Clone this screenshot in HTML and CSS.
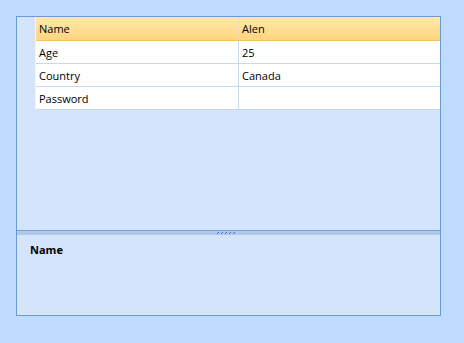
FILE: index.html
```html
<!DOCTYPE html>
<html>
<head>
<meta charset="utf-8">
<link rel="stylesheet" href="styles.css">
</head>
<body>
<div class="frame">
  <div class="grid-pane">
    <div class="grid">
      <div class="row header">
        <div class="rh"></div>
        <div class="cell">Name</div>
        <div class="cell">Alen</div>
      </div>
      <div class="row">
        <div class="rh"></div>
        <div class="cell">Age</div>
        <div class="cell">25</div>
      </div>
      <div class="row">
        <div class="rh"></div>
        <div class="cell">Country</div>
        <div class="cell">Canada</div>
      </div>
      <div class="row">
        <div class="rh"></div>
        <div class="cell">Password</div>
        <div class="cell"></div>
      </div>
    </div>
  </div>
  <div class="splitter">
    <svg class="grip" width="20" height="4" viewBox="0 0 20 4">
      <g fill="#2f6fd0">
        <rect x="1" y="2" width="1" height="1"/><rect x="2" y="1" width="1" height="1"/>
        <rect x="5" y="2" width="1" height="1"/><rect x="6" y="1" width="1" height="1"/>
        <rect x="9" y="2" width="1" height="1"/><rect x="10" y="1" width="1" height="1"/>
        <rect x="13" y="2" width="1" height="1"/><rect x="14" y="1" width="1" height="1"/>
        <rect x="17" y="2" width="1" height="1"/><rect x="18" y="1" width="1" height="1"/>
      </g>
    </svg>
  </div>
  <div class="desc-pane">
    <div class="desc-title">Name</div>
  </div>
</div>
</body>
</html>
```

FILE: styles.css
```css
html, body {
  margin: 0;
  padding: 0;
}
body {
  background: #bfdbff;
  padding: 16px;
  font-family: "Open Sans", "Noto Sans", sans-serif;
  font-size: 11px;
  color: #000;
}
.frame {
  box-sizing: border-box;
  width: 425px;
  height: 300px;
  border: 1px solid #6b9ad6;
  background: #d4e4fa;
  display: flex;
  flex-direction: column;
}
.grid-pane {
  height: 213px;
  border-bottom: 1px solid #7a9fd2;
}
.grid {
  display: flex;
  flex-direction: column;
}
.row {
  display: flex;
  height: 23px;
  box-sizing: border-box;
  border-bottom: 1px solid #c6daf2;
}
.rh {
  width: 18px;
  flex: none;
  background: #d4e4fa;
  border-right: 1px solid #f2f7fd;
  margin-bottom: -1px;
}
.cell {
  background: #fff;
  display: flex;
  align-items: center;
  padding-left: 3px;
  box-sizing: border-box;
  line-height: 1;
}
.cell:nth-child(2) {
  width: 203px;
  border-right: 1px solid #c6daf2;
}
.cell:nth-child(3) {
  flex: 1;
}
.header {
  height: 24px;
  border-bottom: 1px solid #f6c05e;
}
.header .cell {
  background: linear-gradient(#ffe9ac, #ffd57f);
}
.header .cell:nth-child(2) {
  border-right: 1px solid #f0dcae;
}
.splitter {
  height: 4px;
  background: #afc8e9;
  display: flex;
  justify-content: center;
}
.grip {
  display: block;
  margin-left: -5px;
}
.desc-pane {
  flex: 1;
  padding: 7px 13px;
}
.desc-title {
  font-weight: bold;
  font-size: 11px;
}
```
